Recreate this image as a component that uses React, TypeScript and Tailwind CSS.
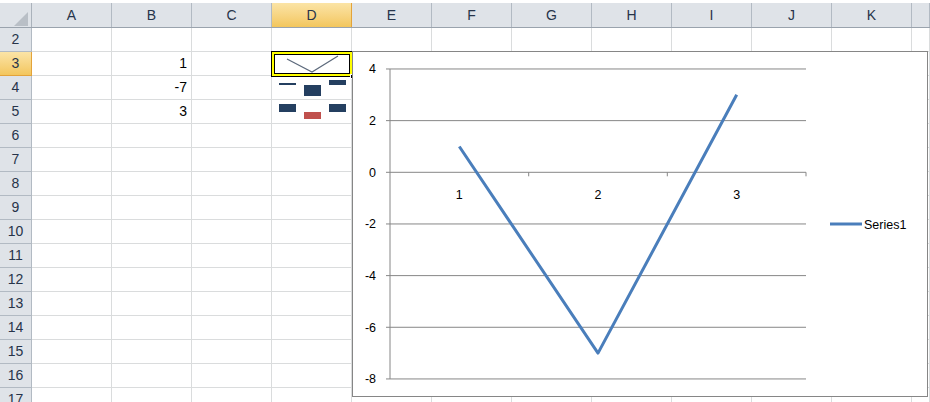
import React from "react";

const COLS = ["A", "B", "C", "D", "E", "F", "G", "H", "I", "J", "K", ""];
const ROWS = Array.from({ length: 16 }, (_, i) => i + 2);
const VALUES: Record<number, string> = { 3: "1", 4: "-7", 5: "3" };

const font = { fontFamily: '"Liberation Sans", Arial, sans-serif' };

function LineSpark() {
  return (
    <svg width="79" height="23" className="block">
      <polyline points="15,7 40,20 66,4" fill="none" stroke="#5d6a7c" strokeWidth="1.2" />
    </svg>
  );
}

function ColumnSpark() {
  return (
    <svg width="79" height="23" className="block">
      <rect x="7" y="7" width="17" height="2" fill="#243f60" />
      <rect x="32" y="9" width="17" height="11" fill="#243f60" />
      <rect x="57" y="4" width="17" height="5" fill="#243f60" />
    </svg>
  );
}

function WinLossSpark() {
  return (
    <svg width="79" height="23" className="block">
      <rect x="7" y="4" width="17" height="8" fill="#243f60" />
      <rect x="32" y="12" width="17" height="7" fill="#c0504d" />
      <rect x="57" y="4" width="17" height="8" fill="#243f60" />
    </svg>
  );
}

function Chart() {
  const gy = (v: number) => 120.3 - v * 25.83;
  const cx = [106.3, 245, 383.7];
  const data = [1, -7, 3];
  const pts = data.map((v, i) => `${cx[i]},${gy(v)}`).join(" ");
  return (
    <div className="absolute left-[352px] top-[51px] h-[346px] w-[576px] border border-[#868686] bg-white">
      <svg width="576" height="346" className="block" style={{ fontFamily: '"Liberation Sans", Arial, sans-serif' }}>
        {[4, 2, 0, -2, -4, -6, -8].map((v) => (
          <g key={v}>
            {v !== 0 && <line x1="37" x2="453" y1={gy(v)} y2={gy(v)} stroke="#868686" strokeWidth="1" />}
            <line x1="33" x2="37" y1={gy(v)} y2={gy(v)} stroke="#868686" strokeWidth="1" />
            <text x="23" y={gy(v) + 4.5} fontSize="12.5" textAnchor="end" fill="#000">
              {v}
            </text>
          </g>
        ))}
        <line x1="37" x2="37" y1={gy(4)} y2={gy(-8)} stroke="#868686" strokeWidth="1" />
        <line x1="37" x2="453" y1={gy(0)} y2={gy(0)} stroke="#868686" strokeWidth="1" />
        {[175.7, 314.3, 453].map((x) => (
          <line key={x} x1={x} x2={x} y1={gy(0)} y2={gy(0) + 4} stroke="#868686" strokeWidth="1" />
        ))}
        {["1", "2", "3"].map((c, i) => (
          <text key={c} x={cx[i]} y="146.5" fontSize="12.5" textAnchor="middle" fill="#000">
            {c}
          </text>
        ))}
        <polyline points={pts} fill="none" stroke="#4a7ebb" strokeWidth="3" strokeLinejoin="round" />
        <line x1="477" x2="509" y1="172" y2="172" stroke="#4a7ebb" strokeWidth="3" />
        <text x="511" y="176.5" fontSize="12.5" fill="#000">
          Series1
        </text>
      </svg>
    </div>
  );
}

function Spark({ row }: { row: number }) {
  if (row === 3) return <LineSpark />;
  if (row === 4) return <ColumnSpark />;
  if (row === 5) return <WinLossSpark />;
  return null;
}

export default function App() {
  return (
    <div className="relative h-[402px] w-[930px] overflow-hidden bg-white" style={font}>
      <div className="h-[3px] bg-white" />
      {/* column headers */}
      <div className="grid h-[25px] grid-cols-[32px_repeat(11,80px)_1fr] border-b border-[#9aa3ad] bg-[#dfe3e8] text-[14px] text-[#27344a]">
        <div className="relative border-r border-[#aab2bb]">
          <svg width="32" height="24" className="absolute left-0 top-0">
            <polygon points="28,9 28,23 14,23" fill="#b9bfc6" />
          </svg>
        </div>
        {COLS.map((c, i) =>
          c === "D" ? (
            <div
              key={i}
              className="flex items-center justify-center border-r border-[#e3a33a] bg-gradient-to-b from-[#fbe4a6] to-[#f3c65c]"
            >
              {c}
            </div>
          ) : (
            <div key={i} className="flex items-center justify-center border-r border-[#b2bac3]">
              {c}
            </div>
          )
        )}
      </div>
      {/* rows */}
      {ROWS.map((r) => (
        <div key={r} className="grid h-6 grid-cols-[32px_repeat(11,80px)_1fr] text-[14px]">
          <div
            className={
              r === 3
                ? "flex items-center justify-center border-b border-r border-[#e3a33a] bg-gradient-to-b from-[#fbe4a6] to-[#f3c65c] text-[#27344a]"
                : "flex items-center justify-center border-b border-r border-[#b2bac3] bg-[#dfe3e8] text-[#27344a]"
            }
          >
            {r}
          </div>
          {COLS.map((c, i) =>
            c === "D" ? (
              <div key={i} className="overflow-hidden border-b border-r border-[#dadcdd]">
                <Spark row={r} />
              </div>
            ) : (
              <div
                key={i}
                className="flex items-center justify-end overflow-hidden border-b border-r border-[#dadcdd] pr-[4px] text-black"
              >
                {c === "B" && VALUES[r]}
              </div>
            )
          )}
        </div>
      ))}
      {/* active cell D3 */}
      <div className="pointer-events-none absolute left-[271px] top-[51px] h-[26px] w-[82px] border border-black">
        <div className="h-full w-full border-2 border-[#ffff00]">
          <div className="h-full w-full border border-black" />
        </div>
        <div className="absolute -bottom-[3px] -right-[3px] h-[5px] w-[5px] border border-white bg-black" />
      </div>
      <Chart />
    </div>
  );
}
